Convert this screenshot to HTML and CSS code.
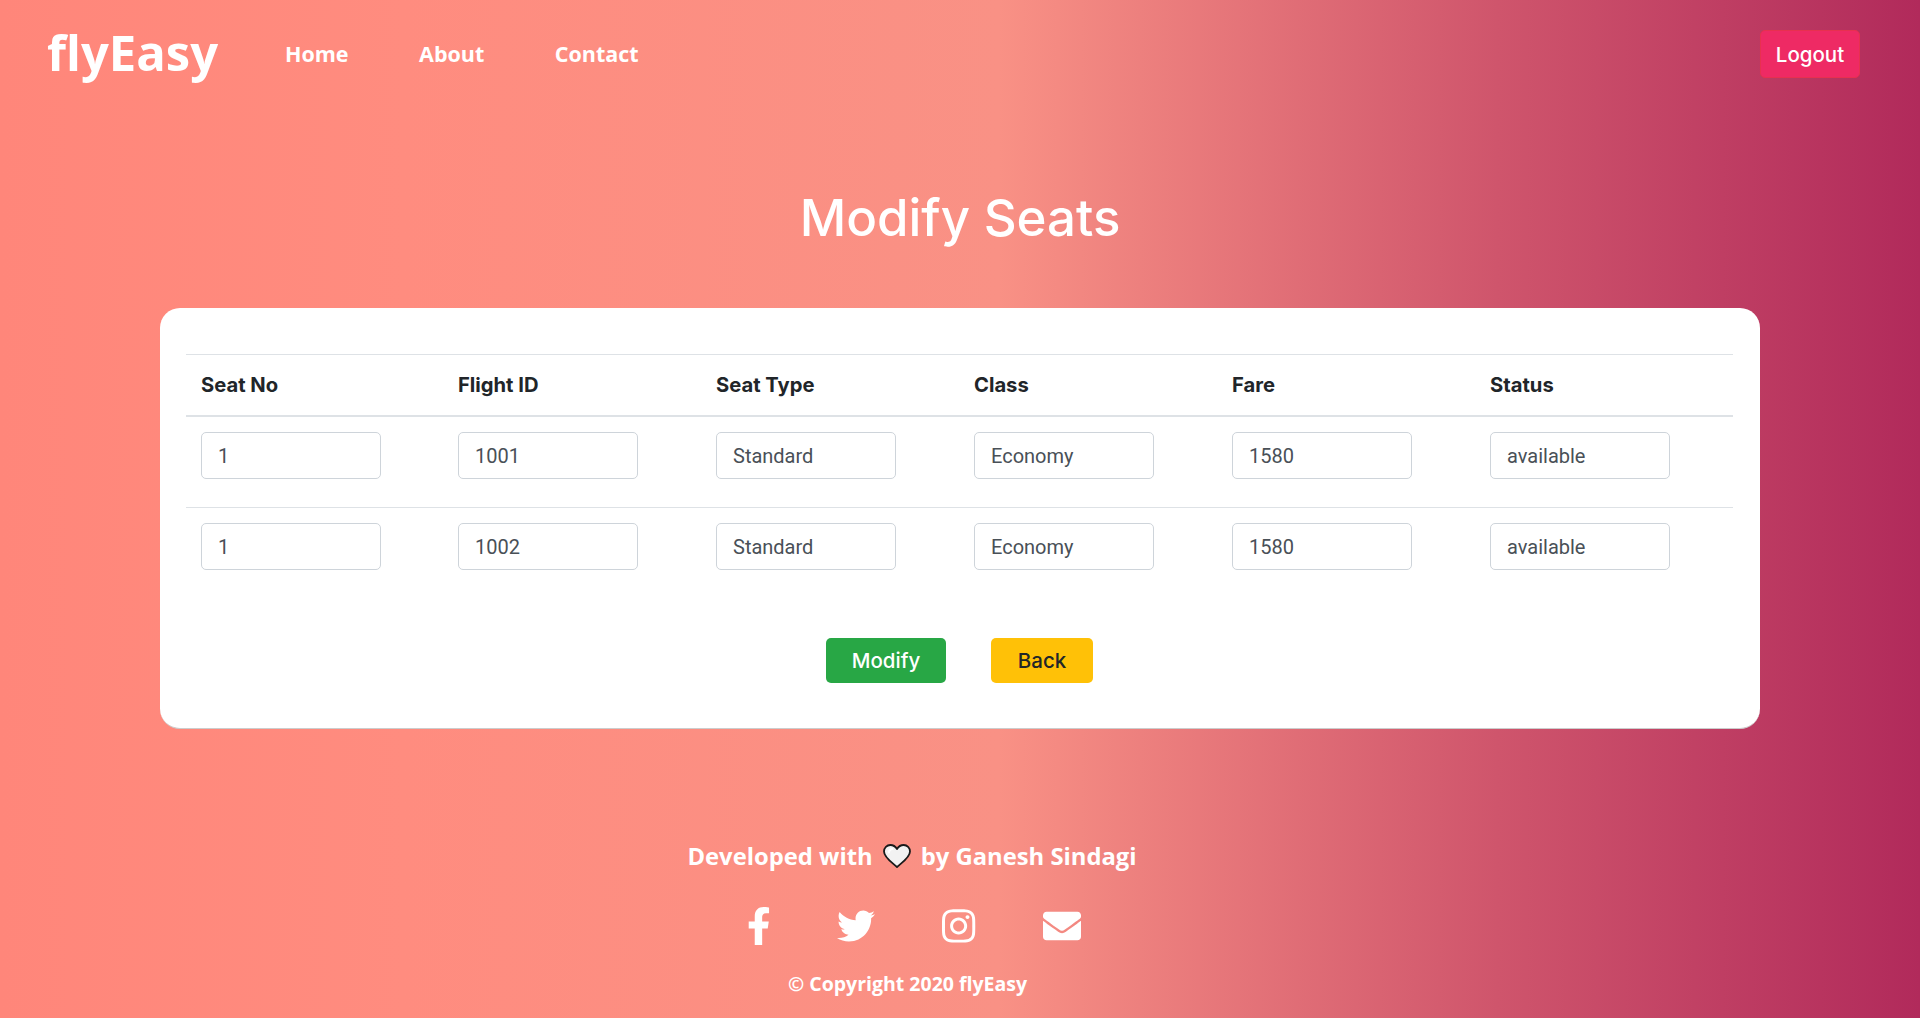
FILE: index.html
```html
<!DOCTYPE html>
<html lang="en">
<head>
  <meta charset="UTF-8">
  <meta name="viewport" content="width=device-width, initial-scale=1.0">
  <title>flyEasy - Modify Seats</title>
  <link rel="stylesheet" href="styles.css">
</head>
<body>
  <nav class="navbar">
    <a class="brand" href="#">flyEasy</a>
    <ul class="nav-links">
      <li><a href="#">Home</a></li>
      <li><a href="#">About</a></li>
      <li><a href="#">Contact</a></li>
    </ul>
    <button class="btn btn-logout" type="button">Logout</button>
  </nav>

  <h1 class="page-title">Modify Seats</h1>

  <main class="card">
    <form>
      <table class="seats">
        <thead>
          <tr>
            <th>Seat No</th>
            <th>Flight ID</th>
            <th>Seat Type</th>
            <th>Class</th>
            <th>Fare</th>
            <th>Status</th>
          </tr>
        </thead>
        <tbody>
          <tr>
            <td><input type="text" value="1"></td>
            <td><input type="text" value="1001"></td>
            <td><input type="text" value="Standard"></td>
            <td><input type="text" value="Economy"></td>
            <td><input type="text" value="1580"></td>
            <td><input type="text" value="available"></td>
          </tr>
          <tr>
            <td><input type="text" value="1"></td>
            <td><input type="text" value="1002"></td>
            <td><input type="text" value="Standard"></td>
            <td><input type="text" value="Economy"></td>
            <td><input type="text" value="1580"></td>
            <td><input type="text" value="available"></td>
          </tr>
        </tbody>
      </table>
      <div class="actions">
        <button class="btn btn-modify" type="submit">Modify</button>
        <button class="btn btn-back" type="button">Back</button>
      </div>
    </form>
  </main>

  <footer class="footer">
    <p class="credit">
      <span>Developed with</span>
      <svg class="heart" viewBox="0 0 28 24" aria-hidden="true">
        <path d="M14 23C9 18.500 1 13.500 1 7.500C1 3.700 3.900 1 7.300 1C10 1 12.500 2.500 14 5C15.500 2.500 18 1 20.700 1C24.100 1 27 3.700 27 7.500C27 13.500 19 18.500 14 23Z" fill="#f2f2f2" stroke="#1a1a1a" stroke-width="1.800" stroke-linejoin="round"/>
        <path d="M6 8.500C6 6.500 7.500 5 9.500 5" fill="none" stroke="#fff" stroke-width="2" stroke-linecap="round"/>
      </svg>
      <span>by Ganesh Sindagi</span>
    </p>
    <div class="social">
      <a href="#"><svg viewBox="0 0 320 512"><path d="M279.14 288l14.22-92.66h-88.91v-60.13c0-25.35 12.42-50.06 52.24-50.06h40.42V6.26S260.43 0 225.36 0c-73.22 0-121.08 44.38-121.08 124.72v70.62H22.89V288h81.39v224h100.17V288z"/></svg></a>
      <a href="#"><svg viewBox="0 0 512 512"><path d="M459.37 151.716c.325 4.548.325 9.097.325 13.645 0 138.72-105.583 298.558-298.558 298.558-59.452 0-114.68-17.219-161.137-47.106 8.447.974 16.568 1.299 25.34 1.299 49.055 0 94.213-16.568 130.274-44.832-46.132-.975-84.792-31.188-98.112-72.772 6.498.974 12.995 1.624 19.818 1.624 9.421 0 18.843-1.3 27.614-3.573-48.081-9.747-84.143-51.98-84.143-102.985v-1.299c13.969 7.797 30.214 12.67 47.431 13.319-28.264-18.843-46.781-51.005-46.781-87.391 0-19.492 5.197-37.36 14.294-52.954 51.655 63.675 129.3 105.258 216.365 109.807-1.624-7.797-2.599-15.918-2.599-24.04 0-57.828 46.782-104.934 104.934-104.934 30.213 0 57.502 12.67 76.67 33.137 23.715-4.548 46.456-13.32 66.599-25.34-7.798 24.366-24.366 44.833-46.132 57.827 21.117-2.273 41.584-8.122 60.426-16.243-14.292 20.791-32.161 39.308-52.628 54.253z"/></svg></a>
      <a href="#"><svg viewBox="0 0 448 512"><path d="M224.1 141c-63.6 0-114.9 51.3-114.9 114.9s51.3 114.9 114.9 114.9S339 319.5 339 255.9 287.7 141 224.1 141zm0 189.6c-41.1 0-74.7-33.5-74.7-74.7s33.5-74.7 74.7-74.7 74.7 33.5 74.7 74.7-33.6 74.7-74.7 74.7zm146.4-194.3c0 14.9-12 26.8-26.8 26.8-14.9 0-26.8-12-26.8-26.8s12-26.8 26.8-26.8 26.8 12 26.8 26.8zm76.1 27.2c-1.7-35.9-9.9-67.7-36.2-93.9-26.2-26.2-58-34.4-93.9-36.2-37-2.1-147.9-2.1-184.9 0-35.8 1.7-67.6 9.9-93.9 36.1s-34.4 58-36.2 93.9c-2.1 37-2.1 147.9 0 184.9 1.7 35.9 9.9 67.7 36.2 93.9s58 34.4 93.9 36.2c37 2.1 147.9 2.1 184.9 0 35.9-1.7 67.7-9.9 93.9-36.2 26.2-26.2 34.4-58 36.2-93.9 2.1-37 2.1-147.8 0-184.8zM398.8 388c-7.8 19.6-22.9 34.7-42.6 42.6-29.5 11.7-99.5 9-132.1 9s-102.7 2.6-132.1-9c-19.6-7.8-34.7-22.9-42.6-42.6-11.7-29.5-9-99.5-9-132.1s-2.6-102.7 9-132.1c7.8-19.6 22.9-34.7 42.6-42.6 29.5-11.7 99.5-9 132.1-9s102.7-2.6 132.1 9c19.6 7.8 34.7 22.9 42.6 42.6 11.7 29.5 9 99.5 9 132.1s2.7 102.7-9 132.1z"/></svg></a>
      <a href="#"><svg viewBox="0 0 512 512"><path d="M502.3 190.8c3.9-3.1 9.7-.2 9.7 4.7V400c0 26.5-21.5 48-48 48H48c-26.5 0-48-21.5-48-48V195.6c0-5 5.7-7.8 9.7-4.7 22.4 17.4 52.1 39.5 154.1 113.6 21.1 15.4 56.7 47.8 92.2 47.6 35.7.3 72-32.8 92.3-47.6 102-74.1 131.6-96.3 154-113.7zM256 320c23.2.4 56.6-29.2 73.4-41.4 132.7-96.3 142.8-104.7 173.4-128.7 5.8-4.5 9.2-11.5 9.2-18.9v-19c0-26.5-21.5-48-48-48H48C21.5 64 0 85.5 0 112v19c0 7.4 3.4 14.3 9.2 18.9 30.6 23.9 40.7 32.4 173.4 128.7 16.8 12.2 50.2 41.8 73.4 41.4z"/></svg></a>
    </div>
    <p class="copyright">© Copyright 2020 flyEasy</p>
  </footer>
</body>
</html>
```

FILE: styles.css
```css
* {
  box-sizing: border-box;
}

html, body {
  height: 100%;
}

body {
  margin: 0;
  overflow: hidden;
  font-family: "Inter", "Noto Sans", sans-serif;
  color: #fff;
  background: linear-gradient(to right, #ff8177 0%, #ff867a 0%, #ff8c7f 21%, #f99185 52%, #cf556c 78%, #b12a5b 100%);
}

a {
  color: inherit;
  text-decoration: none;
}

.navbar {
  display: flex;
  align-items: center;
  height: 108px;
  padding: 0 60px 0 47px;
}

.brand {
  width: 238px;
  padding-bottom: 4px;
  font-family: "Open Sans", sans-serif;
  font-size: 49px;
  font-weight: 700;
  line-height: 1;
}

.nav-links {
  display: flex;
  gap: 70.5px;
  flex: 1;
  margin: 0;
  padding: 0 0 2px;
  list-style: none;
  font-family: "Open Sans", sans-serif;
  font-size: 21.5px;
  font-weight: 700;
}

.btn {
  height: 45px;
  padding: 0;
  border: 0;
  border-radius: 5px;
  font-family: "Inter", sans-serif;
  font-size: 20.5px;
  font-weight: 500;
  cursor: pointer;
}

.btn-logout {
  width: 100px;
  height: 48px;
  border: 1px solid #e8304f;
  background-color: #ee2a64;
  color: #fff;
}

.page-title {
  margin: 72px 0 53px;
  height: 75px;
  font-size: 51px;
  font-weight: 500;
  line-height: 75px;
  text-align: center;
}

.card {
  width: 1600px;
  height: 421px;
  margin: 0 auto;
  padding: 46px 27px 0 26px;
  background-color: #fff;
  border-bottom: 1px solid #ccc;
  border-radius: 20px;
}

.seats {
  width: 100%;
  border-collapse: collapse;
  table-layout: fixed;
  color: #212529;
}

.seats th {
  height: 61px;
  padding: 0 15px;
  border-top: 1px solid #dee2e6;
  border-bottom: 2px solid #dee2e6;
  font-size: 20.2px;
  font-weight: 700;
  text-align: left;
}

.seats th:first-child {
  width: 257px;
}

.seats td {
  padding: 15px 15px 28px;
  border-bottom: 1px solid #dee2e6;
}

.seats tr:last-child td {
  border-bottom: 0;
}

.seats input {
  display: block;
  width: 180px;
  height: 47px;
  padding: 2px 16px 0;
  border: 1px solid #ced4da;
  border-radius: 5px;
  background-color: #fff;
  color: #495057;
  font-family: "Roboto", sans-serif;
  font-size: 20px;
}

.actions {
  display: flex;
  justify-content: center;
  gap: 45px;
  margin-top: 40px;
}

.btn-modify {
  width: 120px;
  background-color: #28a745;
  color: #fff;
}

.btn-back {
  width: 102px;
  background-color: #ffc107;
  color: #212529;
}

.footer {
  padding: 110px 96px 0 0;
  text-align: center;
  font-family: "Open Sans", sans-serif;
  font-weight: 700;
}

.footer p {
  margin: 0;
}

.credit {
  display: flex;
  justify-content: center;
  align-items: center;
  gap: 10px;
  height: 34px;
  font-size: 23.8px;
}

.heart {
  width: 28px;
  height: 24px;
}

.social {
  display: flex;
  justify-content: center;
  gap: 67px;
  margin: 34px 0 0 3px;
}

.social a {
  display: block;
  height: 38px;
}

.social svg {
  display: block;
  height: 38px;
  fill: #fff;
}

.footer .copyright {
  margin-top: 25px;
  padding-right: 9px;
  font-size: 19.5px;
}
```
